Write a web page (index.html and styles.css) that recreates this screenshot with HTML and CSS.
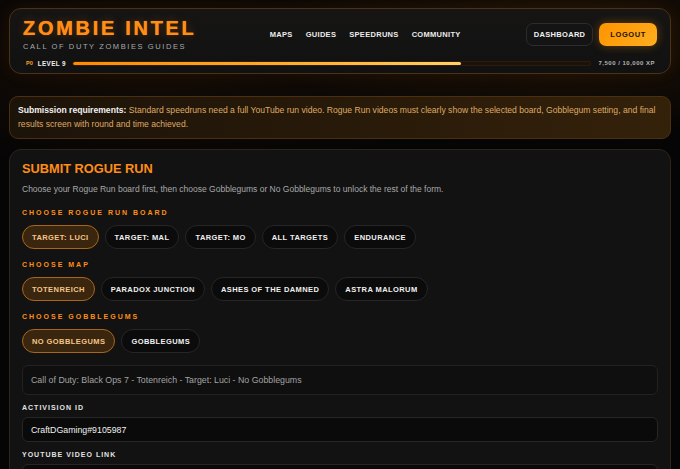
FILE: index.html
```html
<!DOCTYPE html>
<html lang="en">
<head>
  <meta charset="UTF-8" />
  <meta name="viewport" content="width=device-width, initial-scale=1.0"/>
  <title>Zombie Intel - Submit Rogue Run</title>
  <link rel="stylesheet" href="styles.css">
</head>
<body>

  <div class="page">
    <header class="site-header">
      <div class="header-top">
        <div class="brand">
          <div class="brand-title">ZOMBIE INTEL</div>
          <div class="brand-sub">CALL OF DUTY ZOMBIES GUIDES</div>
        </div>
        <nav class="nav">
          <a href="#">MAPS</a>
          <a href="#">GUIDES</a>
          <a href="#">SPEEDRUNS</a>
          <a href="#">COMMUNITY</a>
        </nav>
        <div class="actions">
          <button class="btn">DASHBOARD</button>
          <button class="btn btn-primary">LOGOUT</button>
        </div>
      </div>
      <div class="level-row">
        <span class="prestige">P0</span>
        <span class="level">LEVEL 9</span>
        <div class="xp-bar"><div class="xp-fill" style="width: 75%;"></div></div>
        <span class="xp-text">7,500 / 10,000 XP</span>
      </div>
    </header>

    <div class="notice">
      <strong>Submission requirements:</strong> Standard speedruns need a full YouTube run video. Rogue Run videos must clearly show the selected board, Gobblegum setting, and final results screen with round and time achieved.
    </div>

    <section class="card">
      <h1 class="card-title">SUBMIT ROGUE RUN</h1>
      <p class="card-desc">Choose your Rogue Run board first, then choose Gobblegums or No Gobblegums to unlock the rest of the form.</p>

      <div class="section-label">CHOOSE ROGUE RUN BOARD</div>
      <div class="pills">
        <button class="pill active">TARGET: LUCI</button>
        <button class="pill">TARGET: MAL</button>
        <button class="pill">TARGET: MO</button>
        <button class="pill">ALL TARGETS</button>
        <button class="pill">ENDURANCE</button>
      </div>

      <div class="section-label">CHOOSE MAP</div>
      <div class="pills">
        <button class="pill active">TOTENREICH</button>
        <button class="pill">PARADOX JUNCTION</button>
        <button class="pill">ASHES OF THE DAMNED</button>
        <button class="pill">ASTRA MALORUM</button>
      </div>

      <div class="section-label">CHOOSE GOBBLEGUMS</div>
      <div class="pills">
        <button class="pill active">NO GOBBLEGUMS</button>
        <button class="pill">GOBBLEGUMS</button>
      </div>

      <div class="summary">Call of Duty: Black Ops 7 - Totenreich - Target: Luci - No Gobblegums</div>

      <label class="field-label">ACTIVISION ID</label>
      <input class="field-input" type="text" value="CraftDGaming#9105987">

      <label class="field-label">YOUTUBE VIDEO LINK</label>
      <input class="field-input" type="text" value="">
    </section>
  </div>

</body>
</html>
```

FILE: styles.css
```css
html, body {
  margin: 0;
  padding: 0;
  height: 100%;
  overflow: hidden;
  font-family: 'Liberation Sans', Arial, sans-serif;
  color: #e6e6e6;
  background: #060505;
}

body {
  background:
    radial-gradient(ellipse 420px 140px at 560px 40px, rgba(255, 140, 0, 0.10), transparent 70%),
    radial-gradient(ellipse 500px 160px at 160px 60px, rgba(255, 120, 0, 0.06), transparent 70%),
    #060505;
}

.page {
  padding: 8px 9px 0;
}

/* header */

.site-header {
  background: linear-gradient(180deg, #161514 0%, #111111 100%);
  border: 1px solid #4a3216;
  border-radius: 12px;
  padding: 8px 13px 6px;
  box-shadow: 0 0 18px rgba(255, 130, 0, 0.08);
}

.header-top {
  display: flex;
  justify-content: space-between;
  align-items: center;
}

.brand-title {
  font-family: 'Liberation Sans', Arial, sans-serif;
  font-weight: 900;
  font-size: 20px;
  line-height: 22px;
  letter-spacing: 2.7px;
  color: #ff8d16;
  text-shadow: 0 0 0.7px #ff8d16, 0 0 10px rgba(255, 140, 0, 0.25);
}

.brand-sub {
  margin-top: 3px;
  font-size: 7.5px;
  line-height: 10px;
  letter-spacing: 1.6px;
  color: #a9a9a9;
}

.nav {
  display: flex;
  gap: 13px;
  margin-left: 8px;
}

.nav a {
  color: #ececec;
  text-decoration: none;
  font-weight: bold;
  font-size: 7.5px;
  letter-spacing: 0.3px;
}

.actions {
  display: flex;
  gap: 6px;
}

.btn {
  height: 23px;
  padding: 0 7px;
  border-radius: 7px;
  border: 1px solid #2c2c2c;
  background: #141414;
  color: #f2f2f2;
  font-family: inherit;
  font-weight: bold;
  font-size: 7.5px;
  letter-spacing: 0.3px;
}

.btn-primary {
  padding: 0 11px;
  border: none;
  background: linear-gradient(135deg, #ff9300 0%, #ffae1f 100%);
  color: #1b1205;
  letter-spacing: 0.6px;
  box-shadow: 0 0 10px rgba(255, 150, 0, 0.35);
}

.level-row {
  display: flex;
  align-items: center;
  margin-top: 7px;
  height: 8px;
}

.prestige {
  color: #ffa31a;
  font-weight: bold;
  font-size: 5.5px;
  margin-left: 3px;
  margin-right: 5px;
}

.level {
  color: #f0f0f0;
  font-weight: bold;
  font-size: 6.3px;
  letter-spacing: 0.4px;
  margin-right: 6px;
}

.xp-bar {
  flex: 1;
  height: 3px;
  background: #1d1209;
  border: 1px solid #2e1c0b;
  border-radius: 3px;
  overflow: hidden;
}

.xp-fill {
  height: 100%;
  background: linear-gradient(90deg, #ff8a00 0%, #ffb030 60%, #ffd166 100%);
  border-radius: 3px;
}

.xp-text {
  margin-left: 7px;
  margin-right: 2px;
  color: #b3b3b3;
  font-weight: bold;
  font-size: 6px;
  letter-spacing: 0.5px;
}

/* notice */

.notice {
  margin-top: 22px;
  padding: 6px 8px 7px;
  border: 1px solid #4a2f10;
  border-radius: 9px;
  background: linear-gradient(90deg, #1c1309 0%, #2a1b09 60%, #34210a 100%);
  color: #dfaa66;
  font-size: 8.6px;
  line-height: 14px;
}

.notice strong {
  color: #f2f2f2;
}

/* form card */

.card {
  margin-top: 10px;
  padding: 11px 12px 20px;
  background: #121212;
  border: 1px solid #2e2418;
  border-radius: 12px;
}

.card-title {
  margin: 0;
  font-size: 12.8px;
  line-height: 16px;
  font-weight: bold;
  color: #ff8d16;
}

.card-desc {
  margin: 6px 0 0;
  font-size: 8.5px;
  line-height: 13px;
  color: #a8a8a8;
}

.section-label {
  margin-top: 12px;
  font-size: 7px;
  line-height: 10px;
  font-weight: bold;
  letter-spacing: 2px;
  color: #ff8d16;
}

.pills {
  display: flex;
  gap: 6px;
  margin-top: 7px;
}

.pills + .section-label {
  margin-top: 11px;
}

.pill {
  height: 24px;
  padding: 0 9px;
  border-radius: 12px;
  border: 1px solid #262626;
  background: #0b0b0b;
  color: #f0f0f0;
  font-family: inherit;
  font-weight: bold;
  font-size: 7.5px;
  letter-spacing: 0.42px;
}

.pill.active {
  background: #3a260f;
  border-color: #a8651c;
  color: #f3c587;
}

.summary {
  margin-top: 12px;
  height: 28px;
  padding: 0 8px;
  display: flex;
  align-items: center;
  background: #0f0f0f;
  border: 1px solid #222222;
  border-radius: 6px;
  color: #a3a3a3;
  font-size: 8.8px;
}

.field-label {
  display: block;
  margin-top: 8px;
  font-size: 7px;
  line-height: 10px;
  font-weight: bold;
  letter-spacing: 1px;
  color: #e2e2e2;
}

.field-input {
  display: block;
  box-sizing: border-box;
  width: 100%;
  height: 25px;
  margin-top: 4px;
  padding: 0 8px;
  background: #0a0a0a;
  border: 1px solid #262626;
  border-radius: 6px;
  color: #f0f0f0;
  font-family: inherit;
  font-size: 8.8px;
  outline: none;
}

.field-input + .field-label {
  margin-top: 8px;
}
```
